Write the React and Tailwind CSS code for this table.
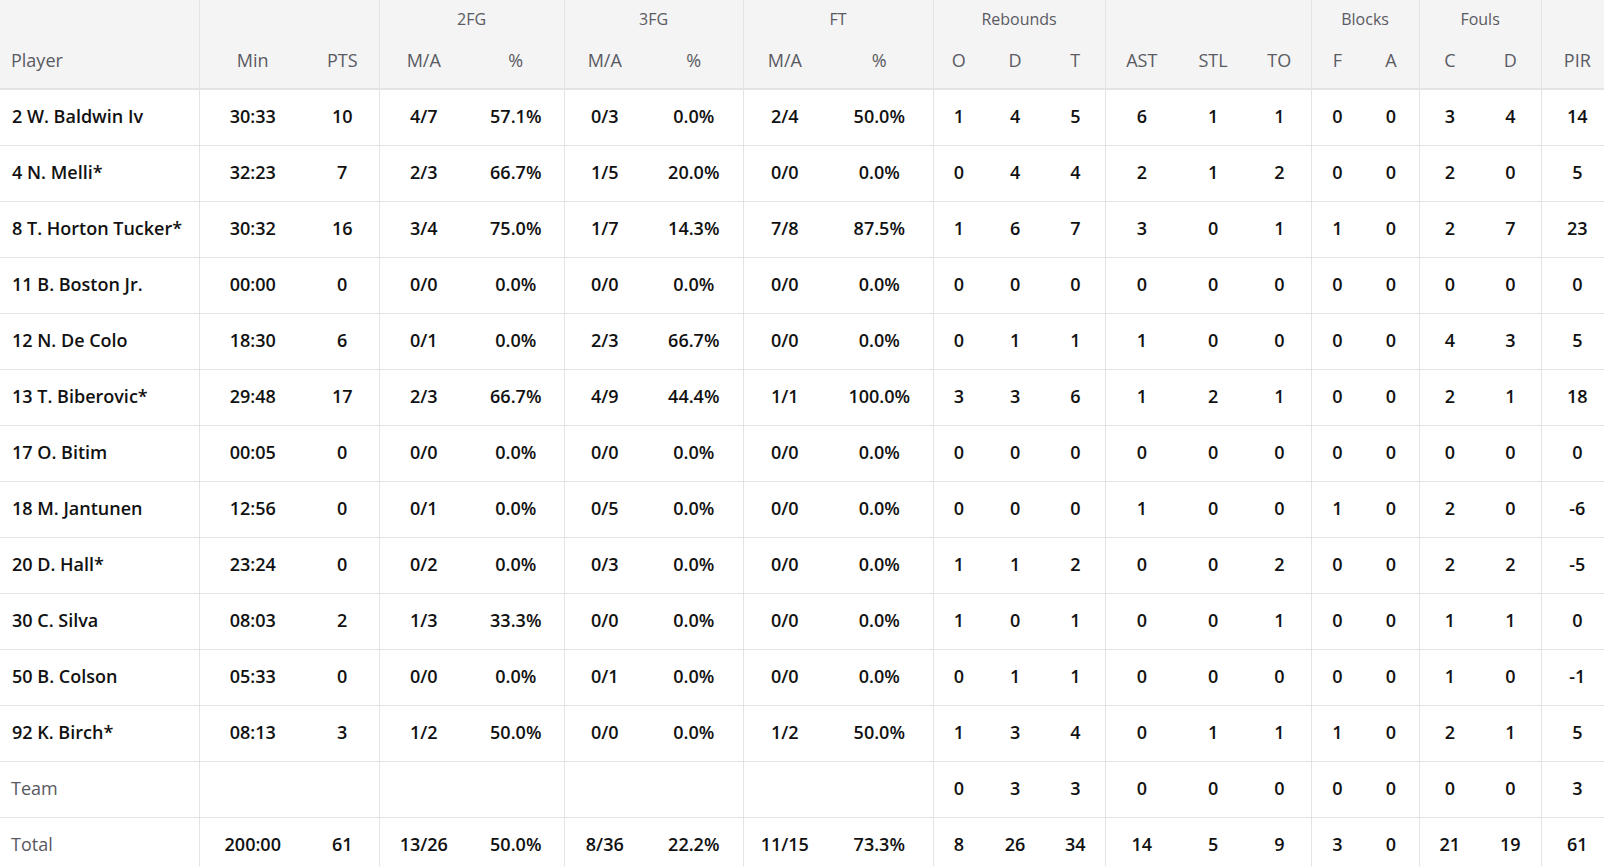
const cols = [
  { key: "player", w: 199 },
  { key: "min", w: 107 },
  { key: "pts", w: 73, edge: true },
  { key: "fg2m", w: 89 },
  { key: "fg2p", w: 96, edge: true },
  { key: "fg3m", w: 81 },
  { key: "fg3p", w: 98, edge: true },
  { key: "ftm", w: 83 },
  { key: "ftp", w: 107, edge: true },
  { key: "ro", w: 51 },
  { key: "rd", w: 62 },
  { key: "rt", w: 59, edge: true },
  { key: "ast", w: 73 },
  { key: "stl", w: 70 },
  { key: "to", w: 63, edge: true },
  { key: "bf", w: 52 },
  { key: "ba", w: 56, edge: true },
  { key: "fc", w: 61 },
  { key: "fd", w: 61, edge: true },
  { key: "pir", w: 72 },
];

const subLabels = [
  "Min", "PTS", "M/A", "%", "M/A", "%", "M/A", "%",
  "O", "D", "T", "AST", "STL", "TO", "F", "A", "C", "D", "PIR",
];

const groups = [
  { label: "", span: 2 },
  { label: "2FG", span: 2 },
  { label: "3FG", span: 2 },
  { label: "FT", span: 2 },
  { label: "Rebounds", span: 3 },
  { label: "", span: 3 },
  { label: "Blocks", span: 2 },
  { label: "Fouls", span: 2 },
  { label: "", span: 1 },
];

const rows = [
  ["2 W. Baldwin Iv", "30:33", "10", "4/7", "57.1%", "0/3", "0.0%", "2/4", "50.0%", "1", "4", "5", "6", "1", "1", "0", "0", "3", "4", "14"],
  ["4 N. Melli*", "32:23", "7", "2/3", "66.7%", "1/5", "20.0%", "0/0", "0.0%", "0", "4", "4", "2", "1", "2", "0", "0", "2", "0", "5"],
  ["8 T. Horton Tucker*", "30:32", "16", "3/4", "75.0%", "1/7", "14.3%", "7/8", "87.5%", "1", "6", "7", "3", "0", "1", "1", "0", "2", "7", "23"],
  ["11 B. Boston Jr.", "00:00", "0", "0/0", "0.0%", "0/0", "0.0%", "0/0", "0.0%", "0", "0", "0", "0", "0", "0", "0", "0", "0", "0", "0"],
  ["12 N. De Colo", "18:30", "6", "0/1", "0.0%", "2/3", "66.7%", "0/0", "0.0%", "0", "1", "1", "1", "0", "0", "0", "0", "4", "3", "5"],
  ["13 T. Biberovic*", "29:48", "17", "2/3", "66.7%", "4/9", "44.4%", "1/1", "100.0%", "3", "3", "6", "1", "2", "1", "0", "0", "2", "1", "18"],
  ["17 O. Bitim", "00:05", "0", "0/0", "0.0%", "0/0", "0.0%", "0/0", "0.0%", "0", "0", "0", "0", "0", "0", "0", "0", "0", "0", "0"],
  ["18 M. Jantunen", "12:56", "0", "0/1", "0.0%", "0/5", "0.0%", "0/0", "0.0%", "0", "0", "0", "1", "0", "0", "1", "0", "2", "0", "-6"],
  ["20 D. Hall*", "23:24", "0", "0/2", "0.0%", "0/3", "0.0%", "0/0", "0.0%", "1", "1", "2", "0", "0", "2", "0", "0", "2", "2", "-5"],
  ["30 C. Silva", "08:03", "2", "1/3", "33.3%", "0/0", "0.0%", "0/0", "0.0%", "1", "0", "1", "0", "0", "1", "0", "0", "1", "1", "0"],
  ["50 B. Colson", "05:33", "0", "0/0", "0.0%", "0/1", "0.0%", "0/0", "0.0%", "0", "1", "1", "0", "0", "0", "0", "0", "1", "0", "-1"],
  ["92 K. Birch*", "08:13", "3", "1/2", "50.0%", "0/0", "0.0%", "1/2", "50.0%", "1", "3", "4", "0", "1", "1", "1", "0", "2", "1", "5"],
];

const team = ["Team", "", "", "", "", "", "", "", "", "0", "3", "3", "0", "0", "0", "0", "0", "0", "0", "3"];
const total = ["Total", "200:00", "61", "13/26", "50.0%", "8/36", "22.2%", "11/15", "73.3%", "8", "26", "34", "14", "5", "9", "3", "0", "21", "19", "61"];

function Row({ cells, label }) {
  return (
    <tr className="h-[56px] border-b border-[#e3e3e3]">
      {cells.map((c, i) => (
        <td
          key={i}
          className={
            "pb-[3px] " +
            (i === 0
              ? label
                ? "pl-[11px] text-left font-normal text-[#58585f]"
                : "pl-[12px] text-left font-semibold text-[#111]"
              : "text-center font-semibold text-[#111]") +
            (i === 0 || cols[i].edge ? " border-r border-[#e3e3e3]" : "")
          }
        >
          {c}
        </td>
      ))}
    </tr>
  );
}

export default function App() {
  return (
    <div className="w-full h-[866px] overflow-hidden bg-white">
      <table
        className="table-fixed border-collapse text-[18px] leading-none"
        style={{ width: 1613, fontFamily: "'Open Sans', Lato, sans-serif" }}
      >
        <colgroup>
          {cols.map((c) => (
            <col key={c.key} style={{ width: c.w }} />
          ))}
        </colgroup>
        <thead className="bg-[#f4f4f4] text-[#5a5a62]">
          <tr className="h-[37px]">
            <th
              rowSpan={2}
              className="align-bottom pb-[19px] pl-[11px] text-left font-normal border-r border-[#e3e3e3]"
            >
              Player
            </th>
            {groups.map((g, i) => (
              <th
                key={i}
                colSpan={g.span}
                className={
                  "pt-[1px] text-center text-[16px] font-normal align-middle" +
                  (i < groups.length - 1 ? " border-r border-[#e3e3e3]" : "")
                }
              >
                {g.label}
              </th>
            ))}
          </tr>
          <tr className="h-[52px] border-b-2 border-[#e3e3e3]">
            {subLabels.map((l, i) => (
              <th
                key={i}
                className={
                  "pb-[19px] align-bottom text-center font-normal" +
                  (cols[i + 1].edge ? " border-r border-[#e3e3e3]" : "")
                }
              >
                {l}
              </th>
            ))}
          </tr>
        </thead>
        <tbody>
          {rows.map((r, i) => (
            <Row key={i} cells={r} />
          ))}
          <Row cells={team} label />
          <Row cells={total} label />
        </tbody>
      </table>
    </div>
  );
}
